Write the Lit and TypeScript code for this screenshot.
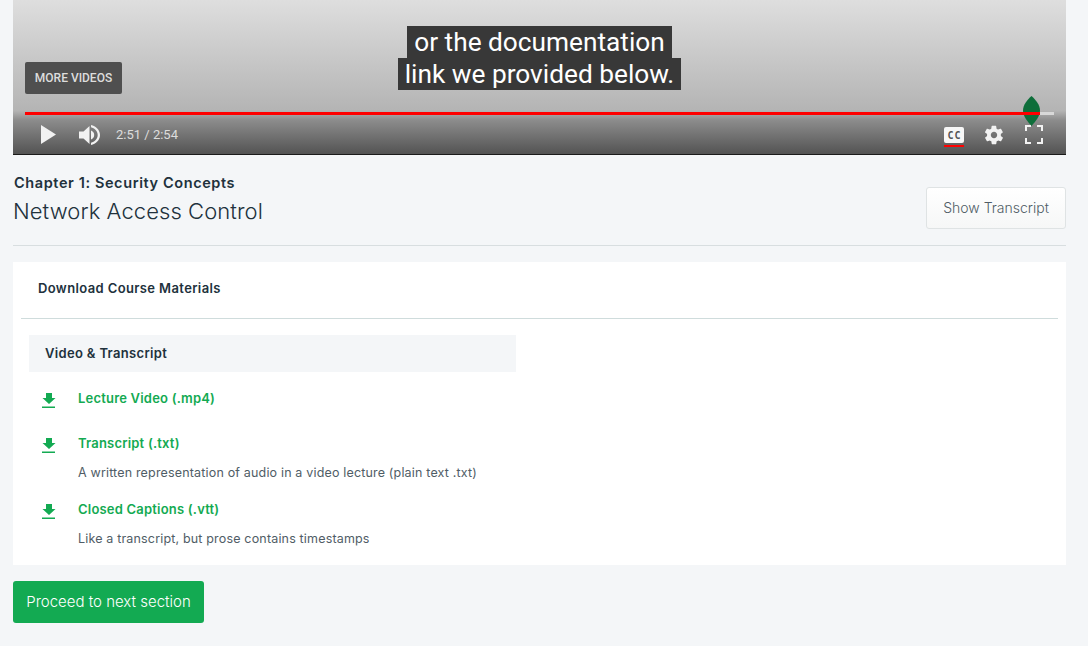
import { LitElement, css, html } from 'lit';
import { customElement } from 'lit/decorators.js';

const downloads = [
  { label: 'Lecture Video (.mp4)', note: '' },
  { label: 'Transcript (.txt)', note: 'A written representation of audio in a video lecture (plain text .txt)' },
  { label: 'Closed Captions (.vtt)', note: 'Like a transcript, but prose contains timestamps' },
];

@customElement('app-root')
export class AppRoot extends LitElement {
  static styles = css`
    :host {
      display: block;
      height: 646px;
      overflow: hidden;
      box-sizing: border-box;
      padding: 0 22px 0 13px;
      background: #f4f6f8;
      color: #21313c;
      font-family: Inter, 'Liberation Sans', sans-serif;
    }

    .player {
      position: relative;
      height: 155px;
      box-sizing: border-box;
      border-bottom: 1px solid #1a1a1a;
      background: linear-gradient(#dedede 0, #b4b4b4 72%, #8c8c8c 78%, #535353 100%);
      font-family: Roboto, sans-serif;
    }

    .captions {
      position: absolute;
      top: 26px;
      left: 0;
      right: 0;
      display: flex;
      flex-direction: column;
      align-items: center;
      color: #fff;
      font-size: 26.25px;
      line-height: 32px;
    }

    .captions span {
      padding: 0 7px;
      background: #383838;
    }

    .more {
      position: absolute;
      left: 12px;
      top: 62px;
      width: 97px;
      height: 32px;
      display: flex;
      align-items: center;
      justify-content: center;
      border-radius: 2px;
      background: #4f4f4f;
      color: #ddd;
      font-size: 12px;
      font-weight: 500;
    }

    .track {
      position: absolute;
      left: 12px;
      top: 112px;
      width: 1029px;
      height: 3px;
      background: #d8d8d8;
    }

    .progress {
      height: 100%;
      width: 1015px;
      background: #f00;
    }

    /* the leaf handle sits behind the progress line */
    .leaf {
      position: absolute;
      left: 1010px;
      top: 95px;
    }

    .controls {
      position: absolute;
      left: 0;
      right: 0;
      top: 120px;
      height: 29px;
      display: flex;
      align-items: center;
      color: #ddd;
      font-size: 13px;
    }

    .controls svg {
      display: block;
      flex: none;
    }

    .play {
      margin-left: 28px;
    }

    .volume {
      margin-left: 23px;
    }

    .time {
      margin-left: 16px;
      flex: 1;
    }

    .cc {
      margin: 5px 19px 0 0;
    }

    .gear {
      margin-right: 20px;
    }

    .fullscreen {
      margin-right: 23px;
    }

    .header {
      display: flex;
      justify-content: space-between;
      align-items: flex-end;
      height: 91px;
      box-sizing: border-box;
      padding-bottom: 16px;
      border-bottom: 1px solid #d8dee0;
    }

    .chapter {
      margin: 0 0 0 1px;
      font-size: 14.5px;
      font-weight: 600;
      letter-spacing: 0.6px;
      line-height: 20px;
    }

    .title {
      margin: 4px 0 4px;
      font-size: 22px;
      font-weight: 300;
      letter-spacing: 0.08px;
      line-height: 28px;
    }

    .transcript {
      width: 140px;
      height: 42px;
      box-sizing: border-box;
      padding: 0 0 2px;
      border: 1px solid #dfe3e4;
      border-radius: 3px;
      background: linear-gradient(#fff, #f6f7f7);
      color: #505d66;
      font: 300 14px Inter, sans-serif;
    }

    .panel {
      margin-top: 16px;
      height: 303px;
      box-sizing: border-box;
      padding: 0 8px;
      background: #fff;
    }

    .panel-title {
      height: 57px;
      box-sizing: border-box;
      display: flex;
      align-items: center;
      padding: 0 0 4px 17px;
      border-bottom: 1px solid #cfdcdc;
      font-size: 13px;
      font-weight: 600;
      letter-spacing: 0.38px;
    }

    .group {
      width: 487px;
      height: 37px;
      margin: 16px 0 0 8px;
      display: flex;
      align-items: center;
      box-sizing: border-box;
      padding: 0 0 1px 16px;
      background: #f4f6f8;
      font-size: 13px;
      font-weight: 600;
      letter-spacing: 0.33px;
    }

    .item {
      display: flex;
      margin-left: 20px;
      height: 66px;
    }

    .item.first {
      height: 45px;
      margin-top: 16px;
    }

    .item svg {
      flex: none;
      margin: 4px 21px 0 0;
    }

    .link {
      color: #13aa52;
      font-size: 13px;
      font-weight: 600;
      letter-spacing: 0.2px;
      line-height: 20px;
    }

    .note {
      margin-top: 10px;
      color: #505d66;
      font-size: 12.5px;
      font-weight: 400;
      letter-spacing: 0.17px;
      line-height: 20px;
    }

    .proceed {
      display: block;
      width: 191px;
      height: 42px;
      margin-top: 16px;
      padding: 0 0 2px;
      border: 0;
      border-radius: 3px;
      background: #13aa52;
      color: #fff;
      font: 300 15px Inter, sans-serif;
    }
  `;

  private downloadIcon() {
    return html`<svg width="16" height="18" viewBox="0 0 16 18" fill="#13aa52">
      <path d="M5 1h6v5h3.500L8 12 1.500 6H5zM1 14.500h13V16H1z" />
    </svg>`;
  }

  protected render() {
    return html`
      <div class="player">
        <div class="captions">
          <span>or the documentation</span>
          <span>link we provided below.</span>
        </div>
        <div class="more">MORE VIDEOS</div>
        <svg class="leaf" width="17" height="32" viewBox="0 0 17 32">
          <path d="M8.500 1C13 5 17 10 17 15.500 17 21 13 26 8.500 31 4 26 0 21 0 15.500 0 10 4 5 8.500 1z" fill="#0d6e3a" />
        </svg>
        <div class="track"><div class="progress"></div></div>
        <div class="controls">
          <svg class="play" width="15" height="19" viewBox="0 0 15 19"><path d="M0 0l15 9.500L0 19z" fill="#f2f2f2" /></svg>
          <svg class="volume" width="21" height="20" viewBox="0 0 21 20" fill="#f2f2f2">
            <path d="M0 6.500h4.500L10.500 1v18l-6-5.500H0z" />
            <path d="M12 5.500c2 .8 3.200 2.400 3.200 4.500s-1.200 3.700-3.200 4.500z" />
            <path d="M12 0c4.800 1 9 4.800 9 10s-4.200 9-9 10v-2.200c3.500-1 6.700-3.800 6.700-7.800S15.500 3.200 12 2.200z" />
          </svg>
          <span class="time">2:51 / 2:54</span>
          <svg class="cc" width="20" height="20" viewBox="0 0 20 20">
            <rect width="20" height="16" rx="2" fill="#f7f7f7" />
            <rect y="18" width="20" height="2" fill="#f00" />
            <text x="10.400" y="11.500" text-anchor="middle" letter-spacing="0.8" font-family="DejaVu Sans Mono" font-size="10" font-weight="700" fill="#555">CC</text>
          </svg>
          <svg class="gear" width="22" height="22" viewBox="0 0 24 24">
            <path fill="#f2f2f2" d="M19.400 13c.1-.3.1-.7.1-1s0-.7-.1-1l2.100-1.600c.2-.2.200-.4.100-.6l-2-3.500c-.1-.2-.4-.3-.6-.2l-2.500 1c-.5-.4-1.100-.7-1.700-1l-.4-2.600c0-.3-.2-.5-.5-.5h-4c-.3 0-.5.200-.5.500l-.4 2.600c-.6.300-1.200.6-1.700 1l-2.500-1c-.2-.1-.5 0-.6.200l-2 3.500c-.1.200-.1.400.1.600L4.500 11c0 .3-.1.700-.1 1s0 .7.100 1l-2.100 1.600c-.2.200-.2.400-.1.600l2 3.500c.1.200.4.300.6.200l2.500-1c.5.400 1.100.7 1.700 1l.4 2.600c0 .3.200.5.500.5h4c.3 0 .5-.2.500-.5l.4-2.600c.6-.3 1.200-.6 1.700-1l2.500 1c.2.100.5 0 .6-.2l2-3.500c.1-.2.100-.4-.1-.6zM12 15.500c-1.900 0-3.500-1.600-3.500-3.500s1.600-3.500 3.500-3.500 3.500 1.600 3.500 3.500-1.600 3.500-3.500 3.500z" />
          </svg>
          <svg class="fullscreen" width="18" height="19" viewBox="0 0 18 19" fill="#f2f2f2">
            <path d="M0 0h6v2H2v4H0zM12 0h6v6h-2V2h-4zM0 13h2v4h4v2H0zM16 13h2v6h-6v-2h4z" />
          </svg>
        </div>
      </div>

      <div class="header">
        <div>
          <p class="chapter">Chapter 1: Security Concepts</p>
          <p class="title">Network Access Control</p>
        </div>
        <button class="transcript">Show Transcript</button>
      </div>

      <div class="panel">
        <div class="panel-title">Download Course Materials</div>
        <div class="group">Video &amp; Transcript</div>
        ${downloads.map(
          (d, i) => html`
            <div class="item ${i === 0 ? 'first' : ''}">
              ${this.downloadIcon()}
              <div>
                <div class="link">${d.label}</div>
                ${d.note ? html`<div class="note">${d.note}</div>` : ''}
              </div>
            </div>
          `,
        )}
      </div>

      <button class="proceed">Proceed to next section</button>
    `;
  }
}
